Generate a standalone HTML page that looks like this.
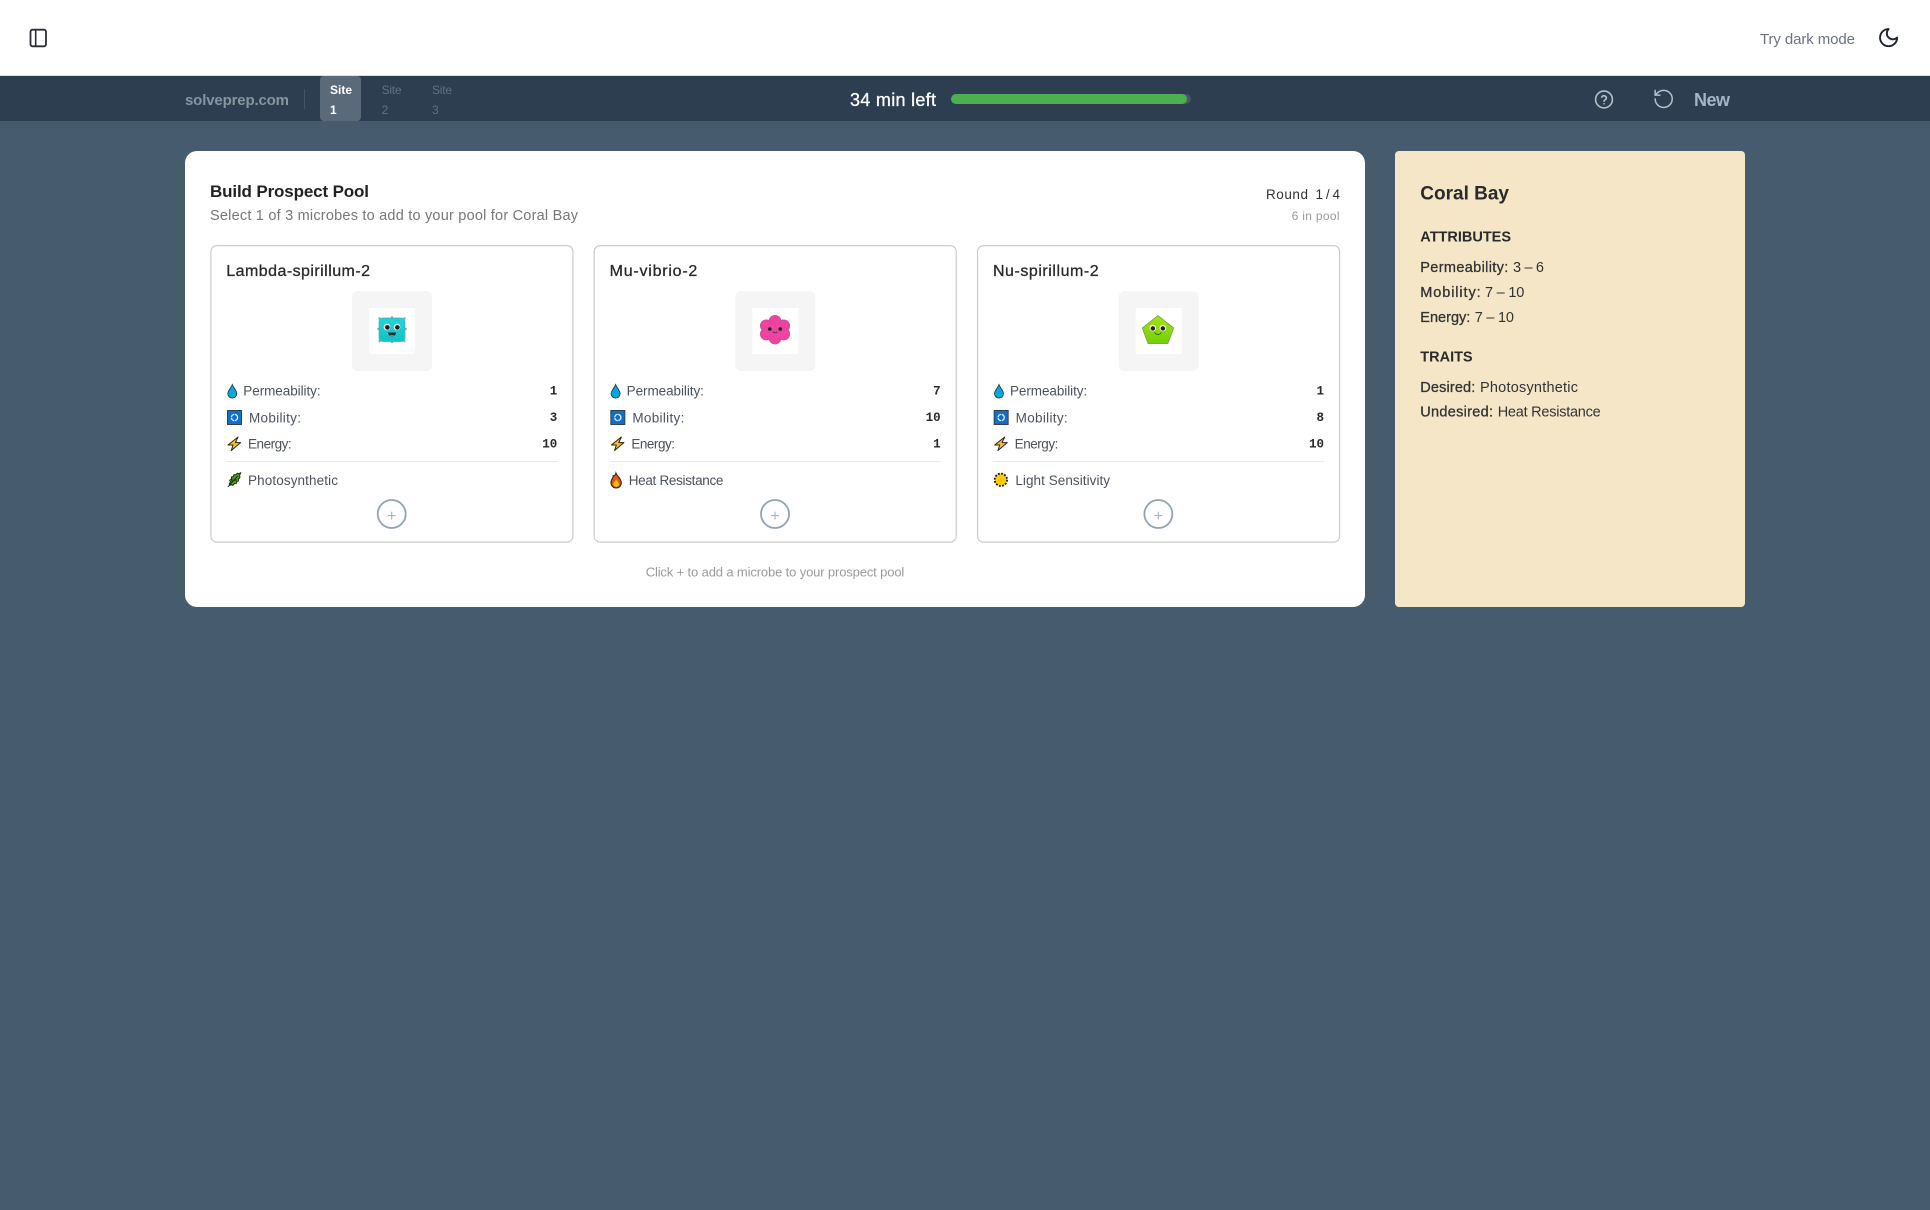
<!DOCTYPE html>
<html lang="en">
<head>
<meta charset="utf-8">
<title>Build Prospect Pool</title>
<style>
html,body{margin:0;padding:0;background:#475b6e;width:1930px;height:1210px;overflow:hidden}
svg{display:block}
text{font-family:"Liberation Sans",sans-serif;white-space:pre}
.b{font-weight:700}
.mono{font-family:"Liberation Mono",monospace;font-weight:700;font-size:12.5px;fill:#2a2a2a}
.lbl{font-size:13.5px;fill:#4a5260}
.med{stroke-width:.3px}
</style>
</head>
<body>
<svg xmlns="http://www.w3.org/2000/svg" width="1930" height="1210" viewBox="0 0 1930 1210">
<defs>
  <linearGradient id="teal" x1="0" y1="0" x2="0" y2="1"><stop offset="0" stop-color="#22d6d8"/><stop offset="1" stop-color="#0fc2c6"/></linearGradient>
  <linearGradient id="lime" x1="0" y1="0" x2="0" y2="1"><stop offset="0" stop-color="#a2e414"/><stop offset="1" stop-color="#74d006"/></linearGradient>
  <g id="drop"><path d="M232.3 384.5C231 388 227.8 390.8 227.8 393.6A4.5 4.5 0 0 0 236.8 393.6C236.8 390.8 233.6 388 232.3 384.5Z" fill="#08a6de" stroke="#23343d" stroke-width=".8"/></g>
  <g id="mob"><rect x="227.5" y="410.5" width="14" height="14" fill="#0f70cc" stroke="#2f4256" stroke-width="1"/><circle cx="234.5" cy="417.5" r="3.1" fill="none" stroke="#e4f2ff" stroke-width="1.3" stroke-dasharray="4.2 .7"/></g>
  <g id="bolt"><path d="M238 437L228 445H233L231.3 450.5L240.6 442.6H235.4L238 437Z" fill="#fbbf2d" stroke="#2a2415" stroke-width="1" stroke-linejoin="round"/></g>
  <g id="leaf"><path d="M240.8 472.6L238.8 473.6L237.2 473.2L236 474.8L234 474.6L233.2 476.6L231.4 477L231.4 479L229.6 480.2L230.4 482L229.2 484L229.6 485.4L231.6 484.8L233 485.4L234.2 483.8L236.2 483.6L236.6 481.6L238.4 481L238.4 479L240 477.6L239.6 475.6Z" fill="#4a9a1c" stroke="#16280a" stroke-width=".9" stroke-linejoin="round"/><path d="M227.8 487L237.5 476.2M232 482L232 478.6M233.8 480.2L236.8 480" stroke="#12240a" stroke-width=".9" fill="none"/></g>
</defs>

<!-- page -->
<rect width="1930" height="1210" fill="#475b6e"/>
<rect width="1930" height="75" fill="#ffffff"/>
<rect y="75" width="1930" height="1" fill="#dfe3e8"/>
<rect y="76" width="1930" height="45" fill="#2c3e50"/>

<!-- top bar -->
<g fill="none" stroke="#2b2f36" stroke-width="1.8" stroke-linecap="round" stroke-linejoin="round">
  <rect x="30.5" y="29.7" width="15.5" height="16.6" rx="2"/>
  <path d="M35.7 29.7V46.3" stroke-width="1.6"/>
</g>
<text x="1760" y="44" font-size="15" fill="#6b7280" textLength="95" lengthAdjust="spacing">Try dark mode</text>
<path transform="translate(1877.2 26.2) scale(.95)" d="M12 3a6 6 0 0 0 9 9 9 9 0 1 1-9-9Z" fill="none" stroke="#20242b" stroke-width="2" stroke-linejoin="round"/>

<!-- nav bar -->
<text x="185" y="105" class="b" font-size="15" fill="#87959f" textLength="104" lengthAdjust="spacing">solveprep.com</text>
<rect x="304" y="89" width="1" height="20" fill="#42546a"/>
<rect x="320" y="76" width="41" height="45" rx="4" fill="#5a6a79"/>
<text x="330" y="94" class="b" font-size="12" fill="#ffffff" textLength="22" lengthAdjust="spacing">Site</text>
<text x="330" y="114" class="b" font-size="12" fill="#ffffff">1</text>
<text x="381.6" y="94" font-size="12" fill="#62717f" textLength="20" lengthAdjust="spacing">Site</text>
<text x="381.6" y="114" font-size="12" fill="#62717f">2</text>
<text x="432" y="94" font-size="12" fill="#62717f" textLength="20" lengthAdjust="spacing">Site</text>
<text x="432" y="114" font-size="12" fill="#62717f">3</text>

<text x="850" y="106" font-size="18" fill="#ffffff" stroke="#ffffff" class="med" textLength="86" lengthAdjust="spacing">34 min left</text>
<rect x="951" y="94" width="240" height="10" rx="5" fill="#4a5568"/>
<rect x="951" y="94" width="236" height="10" rx="5" fill="#4caf50"/>

<g fill="none" stroke="#b4c0c9" stroke-width="1.6" stroke-linecap="round" stroke-linejoin="round">
  <circle cx="1604" cy="99.5" r="8.4"/>
  <path d="M1601.8 97.2A2.4 2.4 0 0 1 1606.4 98C1606.4 99.6 1604 100.1 1604 101.2"/>
  <path d="M1604 103.7h.01"/>
  <g transform="translate(1652.3 87.5) scale(.95)">
    <path d="M3 12a9 9 0 1 0 9-9 9.75 9.75 0 0 0-6.74 2.74L3 8"/>
    <path d="M3 3v5h5"/>
  </g>
</g>
<text x="1694" y="106" class="b" font-size="18" fill="#a3b6c9" textLength="36" lengthAdjust="spacing">New</text>

<!-- main card -->
<rect x="185" y="151" width="1180" height="456" rx="12" fill="#ffffff"/>
<text x="210" y="197" class="b" font-size="17" fill="#222222" textLength="159" lengthAdjust="spacing">Build Prospect Pool</text>
<text x="210" y="220" font-size="14.5" fill="#777777" textLength="368" lengthAdjust="spacing">Select 1 of 3 microbes to add to your pool for Coral Bay</text>
<text x="1266" y="199" font-size="13.5" fill="#333333" textLength="42" lengthAdjust="spacing">Round</text>
<text x="1315.5" y="199" font-size="13.5" fill="#333333" textLength="24.5" lengthAdjust="spacing">1/4</text>
<text x="1291.6" y="220" font-size="12" fill="#999999" textLength="48" lengthAdjust="spacing">6 in pool</text>

<!-- card 1 -->
<g>
  <rect x="210.9" y="245.6" width="362" height="296.5" rx="6" fill="#fff" stroke="#cccccc" stroke-width="1.2"/>
  <text x="226.3" y="276" class="med" font-size="16" fill="#2a2a2a" stroke="#2a2a2a" textLength="143.7" lengthAdjust="spacing">Lambda-spirillum-2</text>
  <rect x="352" y="291" width="80" height="80" rx="6" fill="#f5f5f5"/>
  <rect x="369" y="308" width="46" height="46" fill="#ffffff"/>
  <g>
    <g fill="#6fb0bc"><circle cx="379.5" cy="318.5" r="1.2"/><circle cx="392" cy="317.5" r="1.2"/><circle cx="404.5" cy="318.5" r="1.2"/><circle cx="378.5" cy="329" r="1.2"/><circle cx="405.5" cy="329" r="1.2"/><circle cx="379.5" cy="341" r="1.2"/><circle cx="392" cy="342" r="1.2"/><circle cx="404.5" cy="341" r="1.2"/></g>
    <rect x="379" y="318" width="26" height="23.5" rx="4" fill="url(#teal)" stroke="#4fa9b3" stroke-width=".7"/>
    <circle cx="387" cy="327" r="3.4" fill="#eef0f0"/><circle cx="397" cy="327" r="3.4" fill="#eef0f0"/>
    <circle cx="387.4" cy="327.4" r="2.3" fill="#1e1e1e"/><circle cx="397.4" cy="327.4" r="2.3" fill="#1e1e1e"/>
    <path d="M388 332.5H396C396 337.5 388 337.5 388 332.5Z" fill="#33222a"/>
    <path d="M390 335H394C393.5 336.9 390.5 336.9 390 335Z" fill="#f0506e"/>
  </g>
  <use href="#drop"/>
  <text x="243.3" y="395.7" class="lbl" textLength="77.3" lengthAdjust="spacing">Permeability:</text>
  <text x="557.3" y="394.7" class="mono" text-anchor="end">1</text>
  <use href="#mob"/>
  <text x="249" y="422.5" class="lbl" textLength="52" lengthAdjust="spacing">Mobility:</text>
  <text x="557.3" y="421.2" class="mono" text-anchor="end">3</text>
  <use href="#bolt"/>
  <text x="248" y="448.5" class="lbl" textLength="43.7" lengthAdjust="spacing">Energy:</text>
  <text x="557.3" y="447.6" class="mono" text-anchor="end">10</text>
  <rect x="226.3" y="461" width="331" height="1" fill="#e8e8e8"/>
  <use href="#leaf"/>
  <text x="248" y="485" class="lbl" textLength="90" lengthAdjust="spacing">Photosynthetic</text>
  <circle cx="391.7" cy="514" r="14" fill="#fff" stroke="#90a4ae" stroke-width="1.8"/>
  <text x="391.7" y="521" text-anchor="middle" font-size="16" fill="#a3b5c0">+</text>
</g>

<!-- card 2 -->
<g transform="translate(383.33 0)">
  <rect x="210.9" y="245.6" width="362" height="296.5" rx="6" fill="#fff" stroke="#cccccc" stroke-width="1.2"/>
  <text x="226.3" y="276" class="med" font-size="16" fill="#2a2a2a" stroke="#2a2a2a" textLength="87.7" lengthAdjust="spacing">Mu-vibrio-2</text>
  <rect x="352" y="291" width="80" height="80" rx="6" fill="#f5f5f5"/>
  <rect x="369" y="308" width="46" height="46" fill="#ffffff"/>
  <g fill="#f042a0" stroke="#c9528f" stroke-width=".7">
    <circle cx="391.7" cy="321.3" r="6"/><circle cx="391.7" cy="338" r="6"/>
    <circle cx="383" cy="325.8" r="6"/><circle cx="400.4" cy="325.8" r="6"/>
    <circle cx="383" cy="334" r="6"/><circle cx="400.4" cy="334" r="6"/>
  </g>
  <circle cx="391.7" cy="329.7" r="7.6" fill="#f042a0"/>
  <circle cx="386.5" cy="329" r="1.8" fill="#222"/><circle cx="396.9" cy="329" r="1.8" fill="#222"/>
  <path d="M389.6 331.8Q391.7 334 393.8 331.8" fill="none" stroke="#333" stroke-width=".8"/>
  <use href="#drop"/>
  <text x="243.3" y="395.7" class="lbl" textLength="77.3" lengthAdjust="spacing">Permeability:</text>
  <text x="557.3" y="394.7" class="mono" text-anchor="end">7</text>
  <use href="#mob"/>
  <text x="249" y="422.5" class="lbl" textLength="52" lengthAdjust="spacing">Mobility:</text>
  <text x="557.3" y="421.2" class="mono" text-anchor="end">10</text>
  <use href="#bolt"/>
  <text x="248" y="448.5" class="lbl" textLength="43.7" lengthAdjust="spacing">Energy:</text>
  <text x="557.3" y="447.6" class="mono" text-anchor="end">1</text>
  <rect x="226.3" y="461" width="331" height="1" fill="#e8e8e8"/>
  <path d="M232.6 473C233.6 476 238 478.5 238 482.8A5.2 5.2 0 0 1 227.6 482.8C227.6 479.5 230.2 477.5 229.9 475.7C231.2 476.2 232.2 474.7 232.6 473Z" fill="#e8540f" stroke="#222" stroke-width="1"/>
  <path d="M232.8 479C233.6 481 235.6 482 235.6 484A2.8 2.8 0 0 1 230 484C230 482 232.2 481 232.8 479Z" fill="#ffc107"/>
  <text x="245.4" y="485" class="lbl" textLength="94.7" lengthAdjust="spacing">Heat Resistance</text>
  <circle cx="391.7" cy="514" r="14" fill="#fff" stroke="#90a4ae" stroke-width="1.8"/>
  <text x="391.7" y="521" text-anchor="middle" font-size="16" fill="#a3b5c0">+</text>
</g>

<!-- card 3 -->
<g transform="translate(766.67 0)">
  <rect x="210.9" y="245.6" width="362" height="296.5" rx="6" fill="#fff" stroke="#cccccc" stroke-width="1.2"/>
  <text x="226.3" y="276" class="med" font-size="16" fill="#2a2a2a" stroke="#2a2a2a" textLength="105.7" lengthAdjust="spacing">Nu-spirillum-2</text>
  <rect x="352" y="291" width="80" height="80" rx="6" fill="#f5f5f5"/>
  <rect x="369" y="308" width="46" height="46" fill="#ffffff"/>
  <path d="M391.3 315.6L407 328L401.2 343.6H381.4L375.6 328Z" fill="url(#lime)" stroke="#7d9c55" stroke-width=".8" stroke-linejoin="round"/>
  <circle cx="386.2" cy="328" r="3.3" fill="#eef2e8"/><circle cx="396.2" cy="328" r="3.3" fill="#eef2e8"/>
  <circle cx="386.2" cy="328.4" r="2.2" fill="#222"/><circle cx="396.2" cy="328.4" r="2.2" fill="#222"/>
  <path d="M387.8 332.6Q391.3 336.6 394.8 332.6" fill="none" stroke="#3f6b10" stroke-width="1"/>
  <use href="#drop"/>
  <text x="243.3" y="395.7" class="lbl" textLength="77.3" lengthAdjust="spacing">Permeability:</text>
  <text x="557.3" y="394.7" class="mono" text-anchor="end">1</text>
  <use href="#mob"/>
  <text x="249" y="422.5" class="lbl" textLength="52" lengthAdjust="spacing">Mobility:</text>
  <text x="557.3" y="421.2" class="mono" text-anchor="end">8</text>
  <use href="#bolt"/>
  <text x="248" y="448.5" class="lbl" textLength="43.7" lengthAdjust="spacing">Energy:</text>
  <text x="557.3" y="447.6" class="mono" text-anchor="end">10</text>
  <rect x="226.3" y="461" width="331" height="1" fill="#e8e8e8"/>
  <circle cx="234.2" cy="479.8" r="6.2" fill="#ffcb05" stroke="#1f1c10" stroke-width="1.8" stroke-dasharray="1.9 1.35"/>
  <text x="248.7" y="485" class="lbl" textLength="94.7" lengthAdjust="spacing">Light Sensitivity</text>
  <circle cx="391.7" cy="514" r="14" fill="#fff" stroke="#90a4ae" stroke-width="1.8"/>
  <text x="391.7" y="521" text-anchor="middle" font-size="16" fill="#a3b5c0">+</text>
</g>

<text x="775" y="576.5" text-anchor="middle" font-size="13" fill="#9a9a9a" textLength="258.6" lengthAdjust="spacing">Click + to add a microbe to your prospect pool</text>

<!-- side panel -->
<rect x="1395" y="151" width="350" height="456" rx="4" fill="#f5e6c8"/>
<text x="1420.3" y="199.3" class="b" font-size="19" fill="#2a2a2a" textLength="88.7" lengthAdjust="spacing">Coral Bay</text>
<text x="1420.3" y="241.7" class="b" font-size="14.5" fill="#2a2a2a" textLength="90.7" lengthAdjust="spacing">ATTRIBUTES</text>
<g font-size="14.5" fill="#333333">
  <text x="1420.3" y="272" class="med" stroke="#333333" textLength="88" lengthAdjust="spacing">Permeability:</text>
  <text x="1513" y="272" textLength="31" lengthAdjust="spacing">3 – 6</text>
  <text x="1420.3" y="297" class="med" stroke="#333333" textLength="60.3" lengthAdjust="spacing">Mobility:</text>
  <text x="1485" y="297" textLength="39.3" lengthAdjust="spacing">7 – 10</text>
  <text x="1420.3" y="322" class="med" stroke="#333333" textLength="50" lengthAdjust="spacing">Energy:</text>
  <text x="1474.7" y="322" textLength="39.3" lengthAdjust="spacing">7 – 10</text>
</g>
<text x="1420.3" y="361.7" class="b" font-size="14.5" fill="#2a2a2a" textLength="52.3" lengthAdjust="spacing">TRAITS</text>
<g font-size="14.5" fill="#333333">
  <text x="1420.3" y="392" class="med" stroke="#333333" textLength="55" lengthAdjust="spacing">Desired:</text>
  <text x="1480" y="392" textLength="98" lengthAdjust="spacing">Photosynthetic</text>
  <text x="1420.3" y="416.7" class="med" stroke="#333333" textLength="72.7" lengthAdjust="spacing">Undesired:</text>
  <text x="1497.7" y="416.7" textLength="103" lengthAdjust="spacing">Heat Resistance</text>
</g>
</svg>
</body>
</html>
